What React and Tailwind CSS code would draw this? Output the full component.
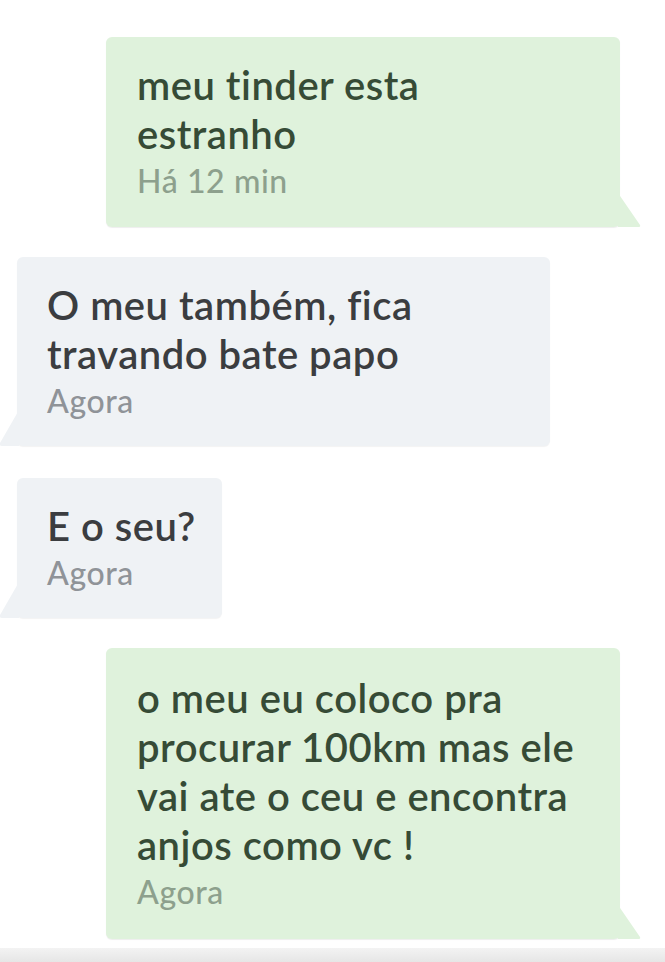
const font = { fontFamily: "Lato, 'Liberation Sans', sans-serif" };

function Tail({ side, color }) {
  if (side === "right") {
    return (
      <svg className="absolute bottom-0 right-[-22px]" width="24" height="34" viewBox="0 0 24 34">
        <path d="M0 0 L22 32 Q23 34 20 34 L0 34 Z" fill={color} />
      </svg>
    );
  }
  return (
    <svg className="absolute bottom-0 left-[-18px]" width="20" height="36" viewBox="0 0 20 36">
      <path d="M20 0 L1 33 Q0 36 3 36 L20 36 Z" fill={color} />
    </svg>
  );
}

const lineCls =
  "whitespace-nowrap text-[40px] font-semibold leading-[49px] tracking-[0.5px] [font-variant-ligatures:none]";
const timeCls = "text-[32px] font-medium leading-[44px] tracking-[0.6px]";

function Sent({ lines, time, pad }) {
  return (
    <div
      className={`relative ml-[106px] w-[514px] rounded-md bg-[#dff2dc] pl-[31px] shadow-[0_1px_1px_rgba(0,0,0,0.07)] ${pad}`}
    >
      {lines.map((l) => (
        <div key={l} className={`${lineCls} text-[#364b36]`}>
          {l}
        </div>
      ))}
      <div className={`${timeCls} text-[#8da08d]`}>{time}</div>
      <Tail side="right" color="#dff2dc" />
    </div>
  );
}

function Received({ lines, time, width }) {
  return (
    <div
      className={`relative ml-[17px] rounded-md bg-[#eff2f5] pl-[30px] pt-[24px] pb-[23px] shadow-[0_1px_1px_rgba(0,0,0,0.05)] ${width}`}
    >
      {lines.map((l) => (
        <div key={l} className={`${lineCls} text-[#3b3d40]`}>
          {l}
        </div>
      ))}
      <div className={`${timeCls} text-[#8f9398]`}>{time}</div>
      <Tail side="left" color="#eff2f5" />
    </div>
  );
}

export default function App() {
  return (
    <div className="flex h-[962px] w-[665px] flex-col bg-white pt-[37px]" style={font}>
      <Sent lines={["meu tinder esta", "estranho"]} time="Há 12 min" pad="pt-[24px] pb-[24px]" />
      <div className="h-[30px]" />
      <Received lines={["O meu também, fica", "travando bate papo"]} time="Agora" width="w-[533px]" />
      <div className="h-[32px]" />
      <Received lines={["E o seu?"]} time="Agora" width="w-[205px]" />
      <div className="h-[30px]" />
      <Sent
        lines={["o meu eu coloco pra", "procurar 100km mas ele", "vai ate o ceu e encontra", "anjos como vc !"]}
        time="Agora"
        pad="pt-[26px] pb-[25px]"
      />
      <div className="flex-1" />
      <div className="h-[14px] bg-gradient-to-b from-[#f3f3f3] to-[#e6e6e6]" />
    </div>
  );
}
